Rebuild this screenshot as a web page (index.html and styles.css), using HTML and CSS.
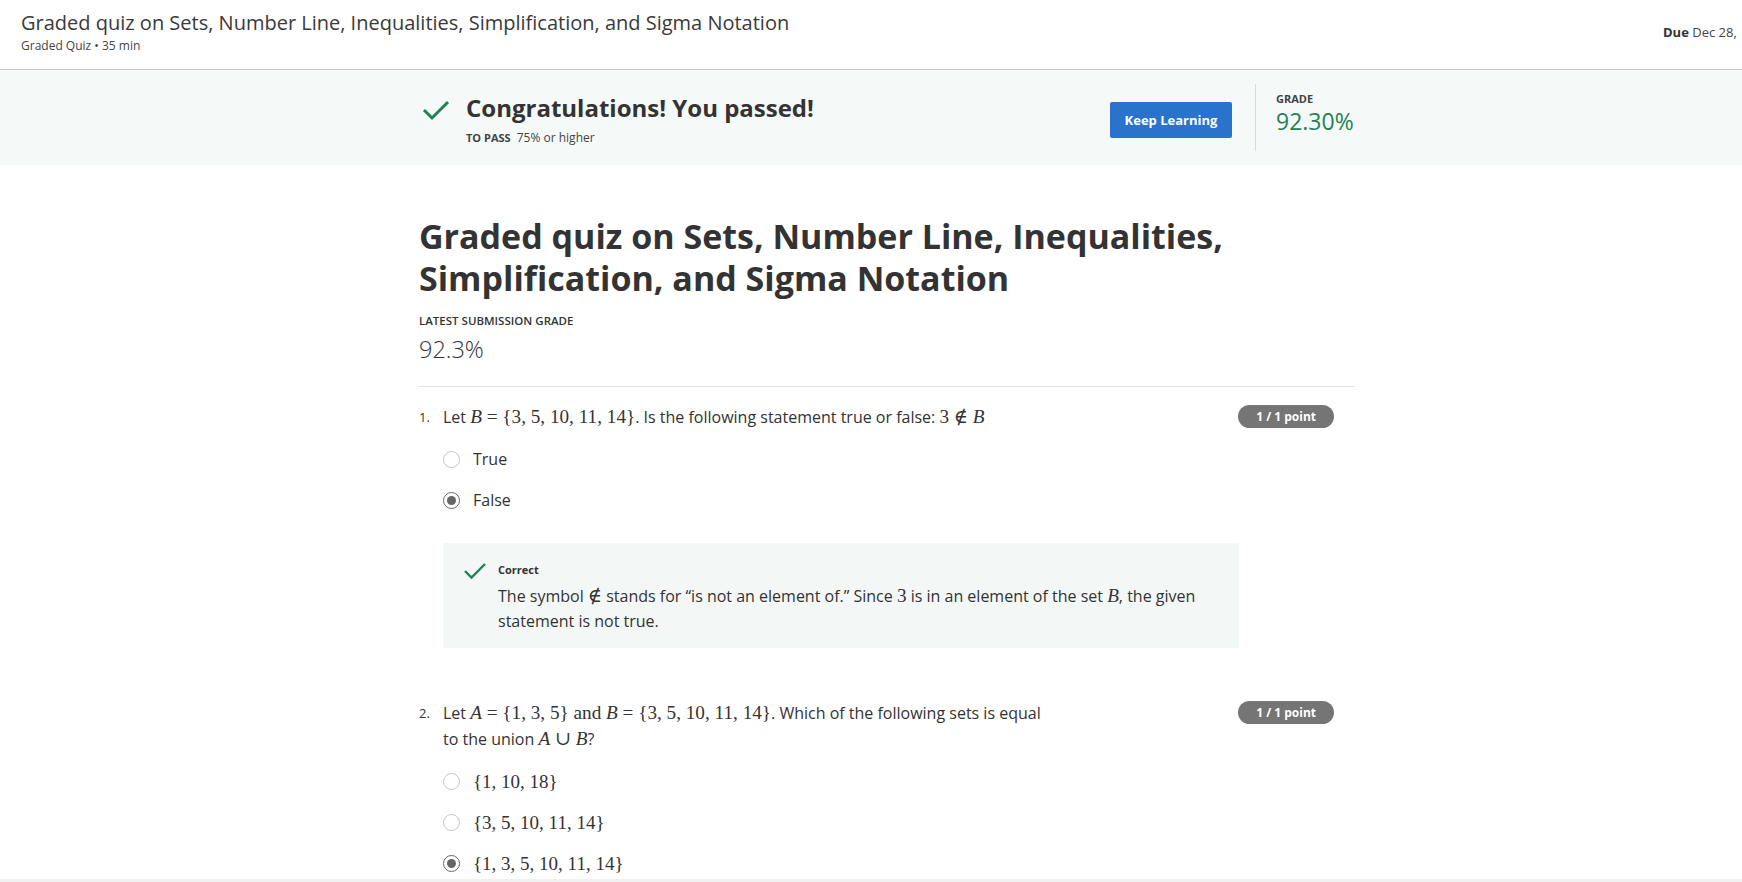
FILE: index.html
```html
<!DOCTYPE html>
<html>
<head>
<meta charset="utf-8">
<link rel="stylesheet" href="styles.css">
</head>
<body>
<header class="topbar">
  <div class="topbar-left">
    <div class="topbar-title">Graded quiz on Sets, Number Line, Inequalities, Simplification, and Sigma Notation</div>
    <div class="topbar-sub">Graded Quiz • 35 min</div>
  </div>
  <div class="topbar-due"><b>Due</b> Dec 28,</div>
</header>

<section class="banner">
  <div class="banner-inner">
    <svg class="banner-check" width="28" height="22" viewBox="0 0 28 22"><path d="M2 11 L10 19 L26 3" fill="none" stroke="#1f8354" stroke-width="3"/></svg>
    <div class="banner-text">
      <div class="banner-title">Congratulations! You passed!</div>
      <div class="banner-pass"><b>TO PASS</b> 75% or higher</div>
    </div>
    <button class="btn-keep">Keep Learning</button>
    <div class="banner-grade">
      <div class="grade-label">GRADE</div>
      <div class="grade-value">92.30%</div>
    </div>
  </div>
</section>

<main class="content">
  <h1 class="quiz-title">Graded quiz on Sets, Number Line, Inequalities, Simplification, and Sigma Notation</h1>
  <div class="latest-label">LATEST SUBMISSION GRADE</div>
  <div class="latest-value">92.3%</div>
  <hr class="divider">

  <div class="question">
    <div class="q-head">
      <span class="q-num">1.</span>
      <div class="q-text">Let <span class="m"><i>B</i> = {3, 5, 10, 11, 14}</span>. Is the following statement true or false: <span class="m">3 ∉ <i>B</i></span></div>
      <span class="badge">1 / 1 point</span>
    </div>
    <div class="options">
      <div class="option"><span class="radio"></span><span class="opt-label">True</span></div>
      <div class="option"><span class="radio checked"></span><span class="opt-label">False</span></div>
    </div>
    <div class="feedback">
      <svg class="fb-check" width="24" height="18" viewBox="0 0 24 18"><path d="M2 9 L8.5 15.5 L22 2" fill="none" stroke="#1f8354" stroke-width="2.4"/></svg>
      <div class="fb-body">
        <div class="fb-title">Correct</div>
        <div class="fb-text">The symbol <span class="m">∉</span> stands for “is not an element of.” Since <span class="m">3</span> is in an element of the set <span class="m"><i>B</i></span>, the given statement is not true.</div>
      </div>
    </div>
  </div>

  <div class="question q2">
    <div class="q-head">
      <span class="q-num">2.</span>
      <div class="q-text">Let <span class="m"><i>A</i> = {1, 3, 5} and <i>B</i> = {3, 5, 10, 11, 14}</span>. Which of the following sets is equal to the union <span class="m"><i>A</i> ∪ <i>B</i></span>?</div>
      <span class="badge">1 / 1 point</span>
    </div>
    <div class="options">
      <div class="option"><span class="radio"></span><span class="opt-label m">{1, 10, 18}</span></div>
      <div class="option"><span class="radio"></span><span class="opt-label m">{3, 5, 10, 11, 14}</span></div>
      <div class="option"><span class="radio checked"></span><span class="opt-label m">{1, 3, 5, 10, 11, 14}</span></div>
    </div>
  </div>
</main>
<div class="bottom-strip"></div>
</body>
</html>
```

FILE: styles.css
```css
* { box-sizing: border-box; }
html, body { margin: 0; padding: 0; }
body {
  font-family: "Open Sans", "Noto Sans", sans-serif;
  color: #333;
  background: #fff;
  width: 1742px;
  height: 882px;
  overflow: hidden;
  position: relative;
}

.topbar {
  height: 70px;
  border-bottom: 1px solid #c6c6c6;
  display: flex;
  justify-content: space-between;
  padding: 10px 0 0 21px;
}
.topbar-title { font-size: 20px; line-height: 26px; color: #3a3a3a; }
.topbar-sub { font-size: 12px; line-height: 16px; margin-top: 2px; color: #444; }
.topbar-due {
  width: 79px;
  white-space: nowrap;
  font-size: 13px;
  line-height: 20px;
  margin-top: 12px;
  color: #444;
}
.topbar-due b { color: #333; }

.banner {
  background: #f5f9f8;
  height: 95px;
}
.banner-inner {
  width: 936px;
  margin-left: calc(50% - 452px);
  display: flex;
  align-items: flex-start;
  height: 100%;
}
.banner-check { margin: 29px 0 0 3px; }
.banner-text { margin-left: 16px; margin-top: 22px; flex: 1; }
.banner-title { font-size: 24px; font-weight: 700; line-height: 32px; color: #333; }
.banner-pass { font-size: 12px; line-height: 16px; margin-top: 6px; color: #444; }
.banner-pass b { font-weight: 700; margin-right: 3px; font-size: 11px; }
.btn-keep {
  margin-top: 32px;
  width: 122px;
  height: 36px;
  background: #2a73cc;
  color: #fff;
  border: 0;
  border-radius: 2px;
  font-family: inherit;
  font-size: 13px;
  font-weight: 700;
}
.banner-grade {
  margin: 14px 0 14px 23px;
  padding: 8px 0 0 20px;
  border-left: 1px solid #dadada;
  align-self: stretch;
  width: 100px;
}
.grade-label { font-size: 11px; font-weight: 700; line-height: 14px; color: #444; }
.grade-value { font-size: 23px; line-height: 30px; color: #1f8354; }

.content {
  width: 936px;
  margin-left: calc(50% - 452px);
}
.quiz-title {
  margin: 50px 0 0;
  font-size: 34px;
  line-height: 42px;
  font-weight: 700;
  color: #333;
  width: 820px;
}
.latest-label { margin-top: 14px; font-size: 11.5px; font-weight: 600; line-height: 16px; color: #333; }
.latest-value { margin-top: 5px; font-size: 23.5px; line-height: 30px; font-weight: 300; color: #333; }
.divider { margin: 22px 0 0; border: 0; border-top: 1px solid #e1e1e1; }

.question { margin-top: 17px; }
.q2 { margin-top: 52px; }
.q-head { display: flex; align-items: flex-start; }
.q-num { width: 24px; font-size: 13px; line-height: 26px; }
.q-text { width: 612px; font-size: 16px; line-height: 26px; color: #333; }
.badge {
  margin-left: auto;
  margin-right: 21px;
  margin-top: 1px;
  background: #757575;
  color: #fff;
  font-size: 12px;
  font-weight: 700;
  line-height: 23px;
  padding: 0 18px;
  border-radius: 12px;
}
.m { font-family: "Liberation Serif", "DejaVu Serif", serif; font-size: 1.2em; line-height: 1; }
.m i { font-style: italic; }

.options { margin: 17px 0 0 24px; display: flex; flex-direction: column; gap: 17px; }
.option { display: flex; align-items: center; height: 24px; }
.radio {
  width: 17px; height: 17px;
  border: 1.5px solid #c4c4c4;
  border-radius: 50%;
  display: flex; align-items: center; justify-content: center;
  margin-right: 13px;
  flex: none;
}
.radio.checked { border-color: #666; }
.radio.checked::after {
  content: "";
  width: 9px; height: 9px;
  border-radius: 50%;
  background: #666;
}
.opt-label { font-size: 16px; color: #333; }
.opt-label.m { font-size: 19px; }

.feedback {
  margin: 31px 0 0 24px;
  width: 796px;
  background: #f3f8f6;
  display: flex;
  padding: 19px 20px 14px 20px;
}
.fb-check { margin-top: 0; flex: none; }
.fb-body { margin-left: 11px; }
.fb-title { font-size: 11px; font-weight: 700; line-height: 16px; color: #333; }
.fb-text { font-size: 16px; line-height: 25px; color: #333; margin-top: 6px; }

.bottom-strip {
  position: absolute;
  left: 0; right: 0; bottom: 0;
  height: 3px;
  background: #f0f0f0;
}
```
